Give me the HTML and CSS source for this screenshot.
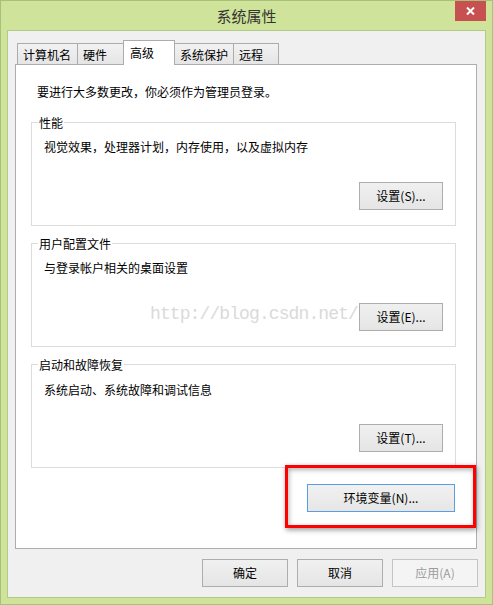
FILE: index.html
```html
<!DOCTYPE html>
<html lang="zh-CN">
<head>
<meta charset="utf-8">
<title>系统属性</title>
<link rel="stylesheet" href="styles.css">
</head>
<body>
<div class="window">
  <div class="titlebar">
    <div class="title">系统属性</div>
    <div class="close">
      <svg width="9" height="8" viewBox="0 0 9 8"><path d="M1 0.5 L8 7.5 M8 0.5 L1 7.5" stroke="#fff" stroke-width="2" fill="none"/></svg>
    </div>
  </div>
  <div class="client">
    <div class="tabs">
      <div class="tab t1">计算机名</div>
      <div class="tab t2">硬件</div>
      <div class="tab t3 selected">高级</div>
      <div class="tab t4">系统保护</div>
      <div class="tab t5">远程</div>
    </div>
    <div class="panel">
      <div class="intro">要进行大多数更改，你必须作为管理员登录。</div>
      <div class="group g1">
        <div class="group-title">性能</div>
        <div class="desc">视觉效果，处理器计划，内存使用，以及虚拟内存</div>
        <div class="btn">设置(S)...</div>
      </div>
      <div class="group g2">
        <div class="group-title">用户配置文件</div>
        <div class="desc">与登录帐户相关的桌面设置</div>
        <div class="btn">设置(E)...</div>
      </div>
      <div class="group g3">
        <div class="group-title">启动和故障恢复</div>
        <div class="desc">系统启动、系统故障和调试信息</div>
        <div class="btn">设置(T)...</div>
      </div>
      <div class="env-row">
        <div class="btn env">环境变量(N)...</div>
      </div>
      <div class="watermark">http://blog.csdn.net/</div>
      <div class="highlight"></div>
    </div>
    <div class="footer">
      <div class="btn foot">确定</div>
      <div class="btn foot">取消</div>
      <div class="btn foot disabled">应用(A)</div>
    </div>
  </div>
</div>
</body>
</html>
```
FILE: styles.css
```css
* { box-sizing: border-box; }
html, body { margin: 0; padding: 0; }
body {
  width: 493px;
  height: 605px;
  overflow: hidden;
  font-family: "Noto Sans CJK SC", "Microsoft YaHei", sans-serif;
  font-size: 12px;
  color: #000;
}
.window {
  width: 493px;
  height: 605px;
  border: 1px solid #a8c178;
  background: #cfe39a;
  display: flex;
  flex-direction: column;
}
.titlebar {
  flex: none;
  height: 29px;
  display: grid;
  grid-template-columns: 1fr auto 1fr;
}
.title {
  grid-column: 2;
  font-size: 15px;
  line-height: 30px;
  color: #333;
}
.close {
  grid-column: 3;
  justify-self: end;
  align-self: start;
  width: 31px;
  height: 20px;
  margin-right: 6px;
  background: #c75050;
  display: flex;
  align-items: center;
  justify-content: center;
}
.close svg { display: block; }
.client {
  flex: 1;
  margin: 0 6px 6px;
  border: 1px solid #b4ca88;
  background: #f0f0f0;
  display: flex;
  flex-direction: column;
}
.tabs {
  display: flex;
  align-items: flex-end;
  height: 25px;
  margin: 9px 0 -1px 9px;
}
.tab {
  height: 21px;
  margin-bottom: 1px;
  margin-left: -1px;
  border: 1px solid #acacac;
  border-bottom: none;
  background: linear-gradient(#f2f2f2, #e5e5e5);
  padding-left: 5px;
  line-height: 22px;
  white-space: nowrap;
}
.tab.t1 { margin-left: 0; width: 61px; }
.tab.t2 { width: 47px; }
.tab.t3 { width: 52px; }
.tab.t4 { width: 60px; }
.tab.t5 { width: 46px; }
.tab.selected {
  position: relative;
  z-index: 1;
  height: 25px;
  margin-bottom: 0;
  background: #fff;
  padding-left: 6px;
  line-height: 24px;
}
.panel {
  position: relative;
  width: 462px;
  height: 485px;
  margin-left: 7px;
  border: 1px solid #adadad;
  background: #fff;
  padding-top: 19px;
}
.intro {
  line-height: 16px;
  padding-left: 21px;
}
.group {
  height: 104px;
  margin: 22px 20px 0 15px;
  border: 1px solid #dcdcdc;
  padding: 0 12px;
  display: flex;
  flex-direction: column;
}
.group.g2, .group.g3 { margin-top: 17px; }
.group-title {
  align-self: flex-start;
  margin: -8px 0 0 -6px;
  padding: 0 1px;
  background: #fff;
  line-height: 16px;
}
.desc {
  margin-top: 8px;
  line-height: 16px;
}
.g3 .desc { margin-top: 9px; }
.btn {
  width: 84px;
  height: 28px;
  border: 1px solid #adadad;
  background: linear-gradient(#f0f0f0, #e5e5e5);
  text-align: center;
  line-height: 26px;
  white-space: nowrap;
}
.group .btn {
  align-self: flex-end;
  margin-top: 27px;
}
.g3 .btn { margin-top: 26px; }
.env-row {
  display: flex;
  justify-content: flex-end;
  margin: 16px 21px 0 0;
}
.btn.env {
  width: 148px;
  border-color: #5a9de3;
  background: linear-gradient(#f1f1f1, #e6e6e6);
}
.footer {
  display: flex;
  justify-content: flex-end;
  gap: 9px;
  margin: 10px 7px 0 0;
}
.btn.foot { width: 86px; }
.btn.disabled {
  border-color: #c4c4c4;
  background: #f4f4f4;
  color: #9c9c9c;
}
.watermark {
  position: absolute;
  left: 134px;
  top: 239px;
  font-family: "Liberation Mono", monospace;
  font-size: 18px;
  letter-spacing: -0.9px;
  line-height: 20px;
  color: #dadada;
  z-index: 0;
}
.highlight {
  position: absolute;
  left: 269px;
  top: 400px;
  width: 191px;
  height: 63px;
  border: 3px solid #f00;
  box-shadow: 1px 2px 5px rgba(0,0,0,0.4), inset 1px 2px 5px rgba(0,0,0,0.3);
}
```
